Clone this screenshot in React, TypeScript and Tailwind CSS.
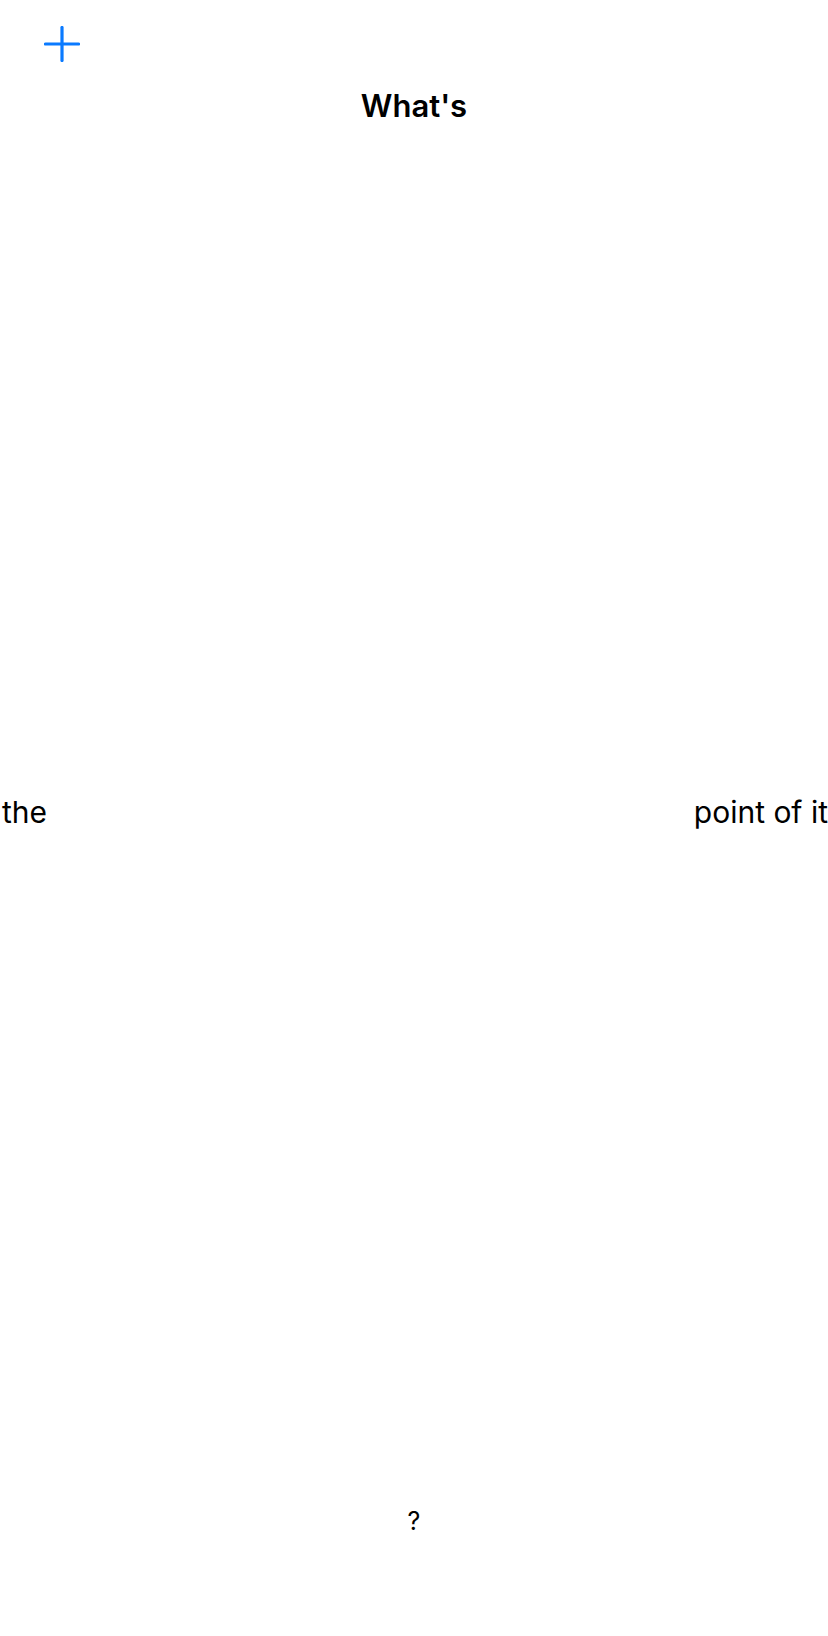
import React from 'react';

const PlusIcon: React.FC = () => (
  <svg width="36" height="36" viewBox="0 0 36 36" fill="none" stroke="#0a7aff" strokeWidth="3.2" strokeLinecap="round">
    <line x1="18" y1="1.5" x2="18" y2="34.5" />
    <line x1="1.5" y1="18" x2="34.5" y2="18" />
  </svg>
);

const App: React.FC = () => {
  return (
    <div className="w-[828px] h-[1636px] bg-white flex flex-col overflow-hidden text-black" style={{ fontFamily: 'Inter, "Noto Sans", sans-serif' }}>
      {/* nav bar */}
      <div className="pt-[26px] pl-[44px] flex">
        <button className="w-9 h-9 flex items-center justify-center">
          <PlusIcon />
        </button>
      </div>
      <h1 className="mt-[24px] text-center text-[31px] leading-[40px] font-semibold">What's</h1>

      {/* middle line */}
      <div className="mt-[666px] flex justify-between items-baseline text-[30px] leading-[40px]">
        <span className="pl-[2px]">the</span>
        <span>point of it</span>
      </div>

      {/* bottom */}
      <div className="mt-[673px] text-center text-[25px] leading-[32px]">?</div>
    </div>
  );
};

export default App;
